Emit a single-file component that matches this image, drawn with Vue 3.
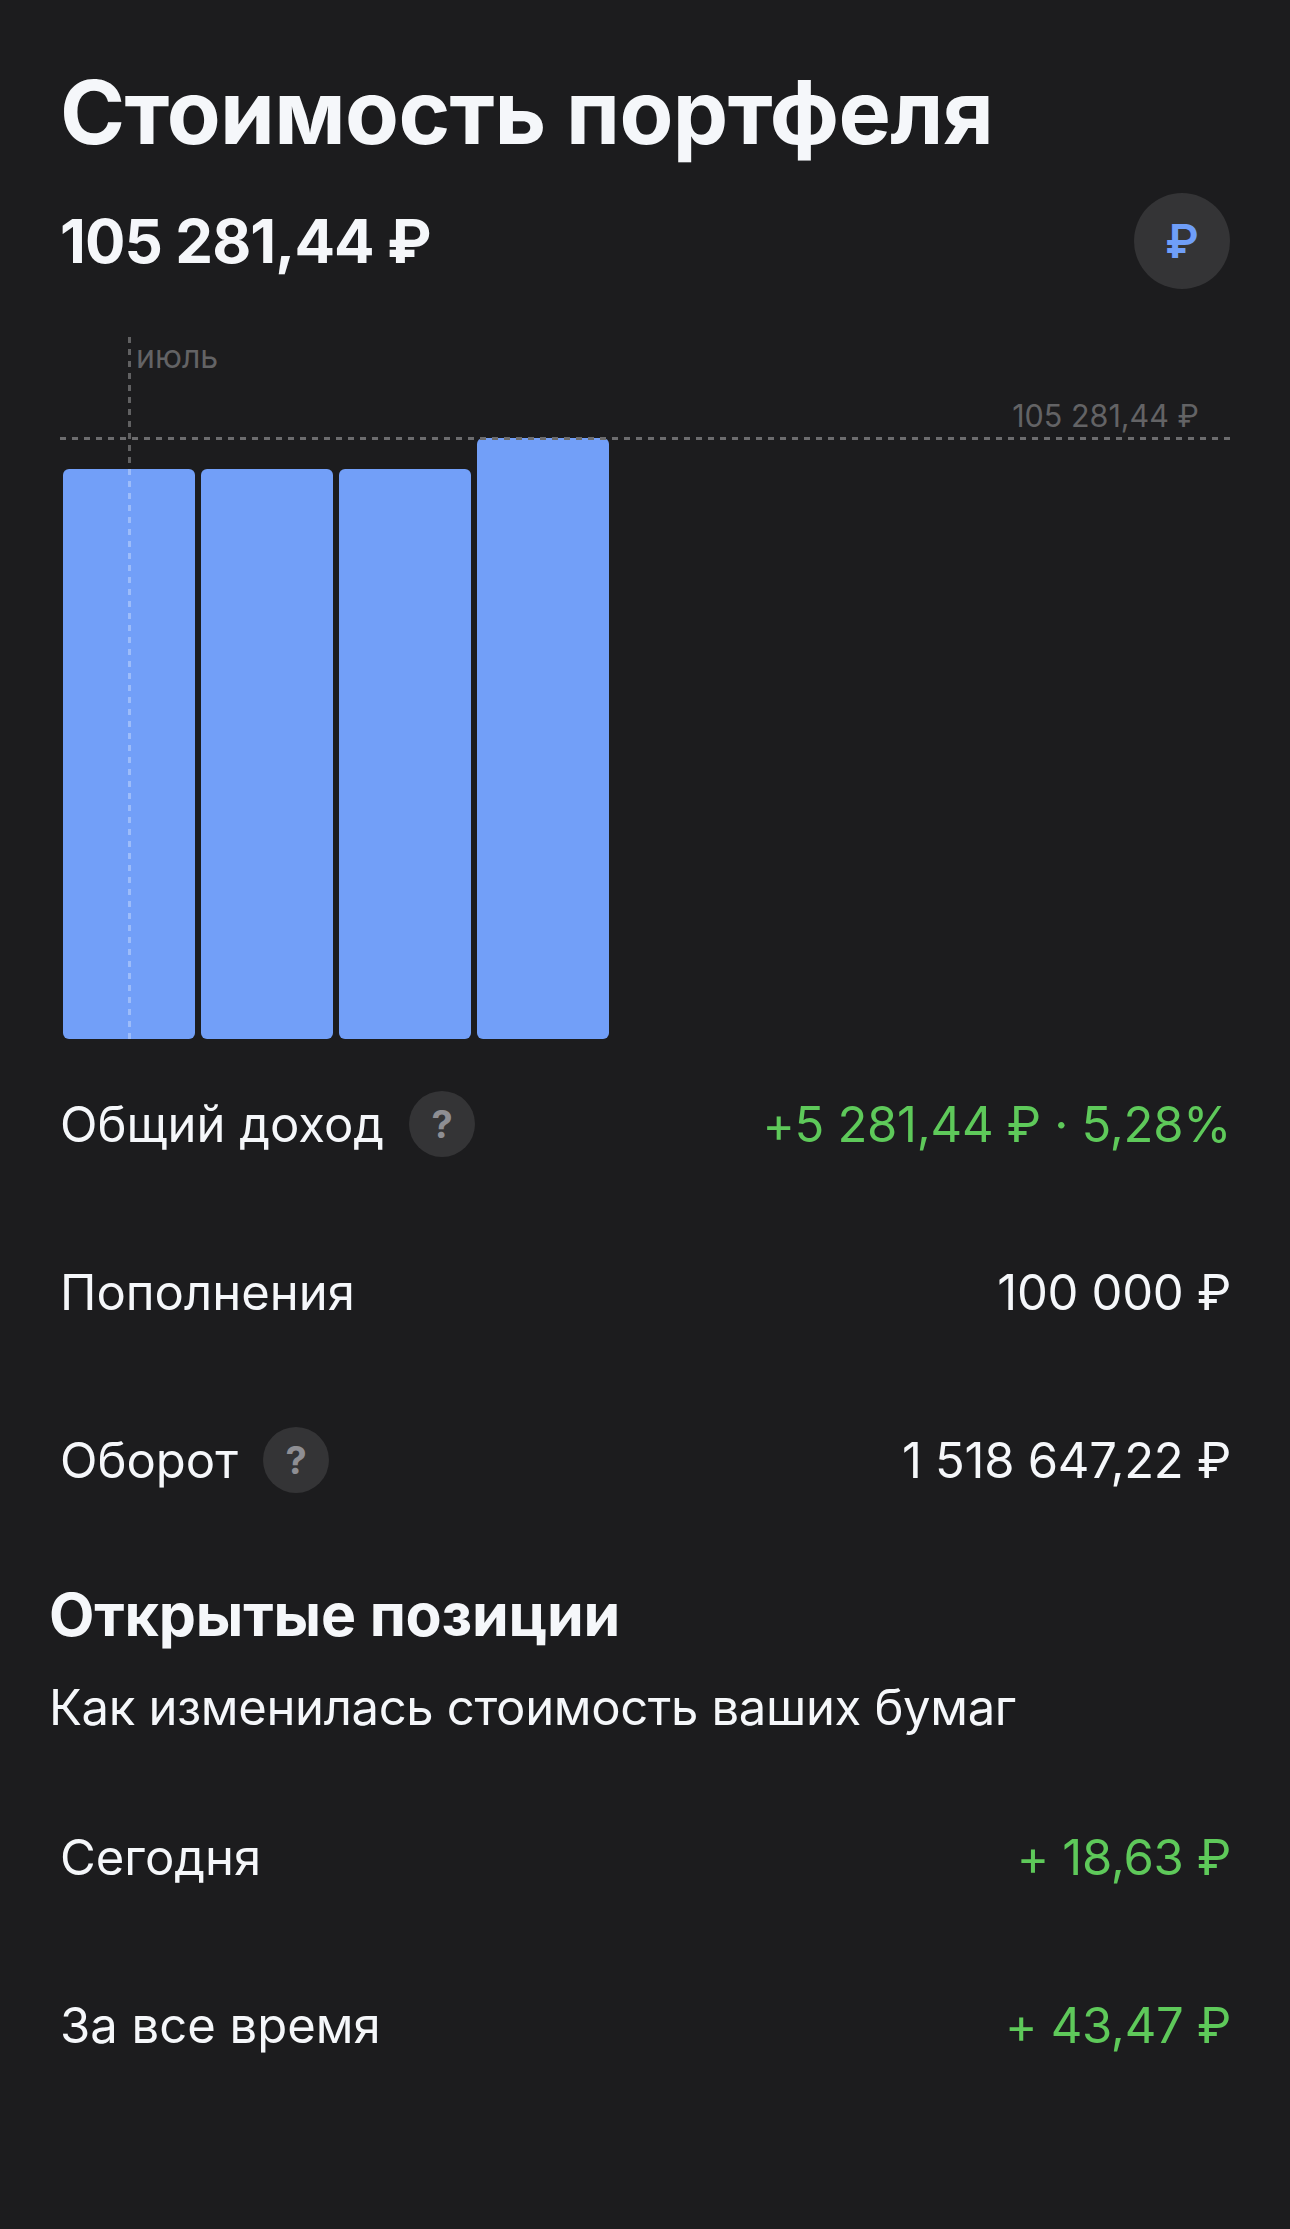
<script setup>
const bars = [570, 570, 570, 601];

const stats = [
  { label: "Общий доход", value: "+5 281,44 ₽ · 5,28%", hint: true, green: true },
  { label: "Пополнения", value: "100 000 ₽" },
  { label: "Оборот", value: "1 518 647,22 ₽", hint: true },
];

const positions = [
  { label: "Сегодня", value: "+ 18,63 ₽", green: true },
  { label: "За все время", value: "+ 43,47 ₽", green: true },
];
</script>

<template>
  <div class="page">
    <h1 class="title">Стоимость портфеля</h1>

    <div class="total">
      <span class="amount">105 281,44 ₽</span>
      <div class="currency">₽</div>
    </div>

    <div class="chart">
      <div class="month-line"></div>
      <span class="month">июль</span>
      <span class="max-label">105 281,44 ₽</span>
      <div class="max-line"></div>
      <div class="bars">
        <div v-for="(h, i) in bars" :key="i" class="bar" :style="{ height: h + 'px' }"></div>
      </div>
    </div>

    <div class="rows">
      <div v-for="row in stats" :key="row.label" class="row">
        <div class="label">
          {{ row.label }}
          <span v-if="row.hint" class="hint">?</span>
        </div>
        <div class="value" :class="{ green: row.green }">{{ row.value }}</div>
      </div>
    </div>

    <section class="open">
      <h2>Открытые позиции</h2>
      <p>Как изменилась стоимость ваших бумаг</p>
    </section>

    <div class="rows lower">
      <div v-for="row in positions" :key="row.label" class="row">
        <div class="label">{{ row.label }}</div>
        <div class="value" :class="{ green: row.green }">{{ row.value }}</div>
      </div>
    </div>
  </div>
</template>

<style scoped>
.page {
  box-sizing: border-box;
  height: 2229px;
  padding: 62px 60px 0;
  background: #1c1c1e;
  color: #f5f7fa;
  font-family: Inter, "Liberation Sans", sans-serif;
  overflow: hidden;
}

.title {
  margin: 0;
  font-size: 88px;
  line-height: 100px;
  font-weight: 700;
  letter-spacing: -0.6px;
}

.total {
  display: flex;
  justify-content: space-between;
  align-items: center;
  margin-top: 31px;
}

.amount {
  font-size: 60px;
  font-weight: 700;
  letter-spacing: -0.9px;
}

.currency {
  width: 96px;
  height: 96px;
  border-radius: 50%;
  background: #343436;
  color: #6f9ef8;
  font-size: 46px;
  font-weight: 600;
  display: flex;
  align-items: center;
  justify-content: center;
}

.chart {
  position: relative;
  height: 702px;
  margin-top: 48px;
}

.bars {
  position: absolute;
  left: 3px;
  bottom: 0;
  display: flex;
  align-items: flex-end;
  gap: 6px;
}

.bar {
  width: 132px;
  background: #729ff8;
  border-radius: 6px;
}

.month-line {
  position: absolute;
  left: 68px;
  top: 0;
  bottom: 0;
  width: 3px;
  z-index: 2;
  background: repeating-linear-gradient(to bottom, rgba(255, 255, 255, 0.3) 0 6px, transparent 6px 12px);
}

.max-line {
  position: absolute;
  left: 0;
  right: 0;
  top: 100px;
  height: 3px;
  z-index: 2;
  background: repeating-linear-gradient(to right, #6c6c6e 0 6px, transparent 6px 12px);
}

.month,
.max-label {
  position: absolute;
  line-height: 36px;
  color: #636365;
}

.month {
  left: 76px;
  top: 2px;
  font-size: 32px;
}

.max-label {
  right: 31px;
  top: 61px;
  font-size: 30.5px;
}

.rows {
  margin-top: 1px;
}

.row {
  display: flex;
  justify-content: space-between;
  align-items: center;
  height: 168px;
  font-size: 49px;
}

.label {
  display: flex;
  align-items: center;
  gap: 25px;
}

.hint {
  width: 66px;
  height: 66px;
  border-radius: 50%;
  background: #343436;
  color: #8e8e93;
  font-size: 38px;
  font-weight: 700;
  display: flex;
  align-items: center;
  justify-content: center;
}

.value {
  margin-right: -1px;
  letter-spacing: -0.3px;
}

.green {
  color: #5ec95a;
}

.open {
  margin: 37px 0 0 -11px;
}

.open h2 {
  margin: 0;
  font-size: 59px;
  line-height: 68px;
  font-weight: 700;
  letter-spacing: -0.2px;
}

.open p {
  margin: 29px 0 0;
  font-size: 49px;
  line-height: 60px;
  letter-spacing: -0.35px;
}

.lower {
  margin-top: 35px;
}
</style>

<style>
body {
  background: #1c1c1e;
}
</style>
